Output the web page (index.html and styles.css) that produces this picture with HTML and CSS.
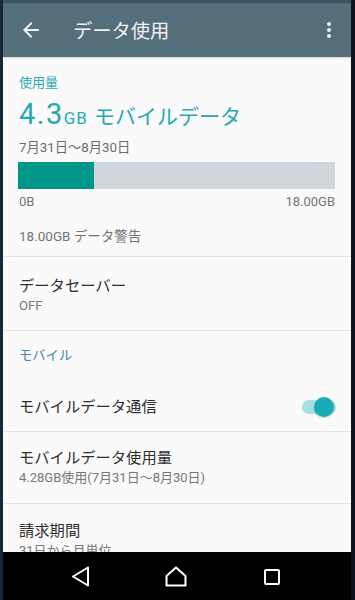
FILE: index.html
```html
<!DOCTYPE html>
<html lang="ja">
<head>
<meta charset="utf-8">
<title>データ使用</title>
<link rel="stylesheet" href="styles.css">
</head>
<body>
<div class="device">
  <div class="edge edge-l"></div>
  <div class="screen">
    <div class="status"></div>
    <header class="toolbar">
      <svg class="tb-icon" width="24" height="24" viewBox="0 0 24 24"><path d="M20 11H7.83l5.59-5.59L12 4l-8 8 8 8 1.41-1.41L7.83 13H20v-2z" fill="#eef1f3"/></svg>
      <h1 class="title">データ使用</h1>
      <svg class="tb-icon more" width="24" height="24" viewBox="0 0 24 24"><path d="M12 8c1.1 0 2-.9 2-2s-.9-2-2-2-2 .9-2 2 .9 2 2 2zm0 2c-1.1 0-2 .9-2 2s.9 2 2 2 2-.9 2-2-.9-2-2-2zm0 6c-1.1 0-2 .9-2 2s.9 2 2 2 2-.9 2-2-.9-2-2-2z" fill="#eef1f3"/></svg>
    </header>
    <main class="content">
      <section class="summary">
        <div class="label">使用量</div>
        <div class="big"><span class="num">4.3</span><span class="unit">GB</span><span class="kind">モバイルデータ</span></div>
        <div class="date">7月31日〜8月30日</div>
        <div class="bar"><div class="fill" style="width:24%"></div></div>
        <div class="scale"><span>0B</span><span>18.00GB</span></div>
        <div class="warn">18.00GB データ警告</div>
      </section>
      <section class="item saver">
        <div class="item-title">データセーバー</div>
        <div class="item-sub">OFF</div>
      </section>
      <div class="header">モバイル</div>
      <section class="item switch-row">
        <div class="item-title">モバイルデータ通信</div>
        <div class="switch"><span class="track"></span><span class="thumb"></span></div>
      </section>
      <section class="item usage">
        <div class="item-title">モバイルデータ使用量</div>
        <div class="item-sub">4.28GB使用(7月31日〜8月30日)</div>
      </section>
      <section class="item billing">
        <div class="item-title">請求期間</div>
        <div class="item-sub">31日から月単位</div>
      </section>
    </main>
    <nav class="navbar">
      <svg width="24" height="24" viewBox="0 0 24 24"><path d="M20 3.5 L5 12.5 L20 21.5 Z" fill="none" stroke="#fff" stroke-width="2" stroke-linejoin="round"/></svg>
      <svg width="24" height="24" viewBox="0 0 24 24"><path d="M2.5 12 L12 3.5 L21.5 12 V21.5 H2.5 Z" fill="none" stroke="#fff" stroke-width="2" stroke-linejoin="round"/></svg>
      <svg width="24" height="24" viewBox="0 0 24 24"><rect x="5" y="6" width="14" height="14" rx="1" fill="none" stroke="#fff" stroke-width="2"/></svg>
    </nav>
  </div>
  <div class="edge edge-r"></div>
</div>
</body>
</html>
```
FILE: styles.css
```css
html, body {
  margin: 0;
  padding: 0;
  background: #000;
}
body {
  width: 355px;
  height: 600px;
  overflow: hidden;
  font-family: "Roboto", "Noto Sans CJK JP", sans-serif;
}
.device {
  display: flex;
  width: 355px;
  height: 600px;
}
.edge-l {
  width: 3px;
  background: #17263b;
}
.edge-r {
  width: 4px;
  background: #0c131d;
}
.screen {
  width: 348px;
  display: flex;
  flex-direction: column;
  background: #fafafa;
}
.status {
  height: 3px;
  background: #3f5462;
}
.toolbar {
  height: 54px;
  background: #546e7a;
  display: flex;
  align-items: center;
  padding: 0 10px 0 16px;
  box-shadow: 0 1px 2px rgba(0,0,0,0.15);
}
.tb-icon {
  flex: none;
  display: block;
}
.title {
  margin: 0 0 0 30px;
  flex: 1;
  font-family: "Noto Sans CJK JP", sans-serif;
  font-weight: 400;
  font-size: 19.3px;
  line-height: 24px;
  color: #eef1f3;
}
.content {
  height: 495px;
  overflow: hidden;
}
.summary {
  padding: 15px 16px 10px 16px;
  border-bottom: 1px solid #e3e3e3;
}
.label {
  height: 20px;
  line-height: 20px;
  font-size: 13px;
  color: #2ba9b0;
  font-family: "Noto Sans CJK JP", sans-serif;
}
.big {
  margin-top: 4px;
  height: 36px;
  line-height: 36px;
  color: #27a8b0;
  white-space: nowrap;
}
.num {
  font-family: "Roboto", sans-serif;
  font-weight: 400;
  font-size: 29px;
  letter-spacing: 1.5px;
}
.unit {
  font-family: "Roboto", sans-serif;
  font-size: 17px;
  letter-spacing: 1px;
  margin-right: 6px;
}
.kind {
  font-family: "Noto Sans CJK JP", sans-serif;
  font-size: 21px;
}
.date {
  margin-top: 7px;
  height: 18px;
  line-height: 18px;
  font-size: 13.3px;
  color: #6b6b6b;
}
.bar {
  margin: 5px 0 0 -1px;
  height: 27px;
  background: #cfd7dc;
}
.fill {
  height: 100%;
  background: #00968a;
}
.scale {
  margin-top: 4px;
  height: 18px;
  line-height: 18px;
  font-size: 13px;
  color: #747474;
  display: flex;
  justify-content: space-between;
}
.warn {
  margin-top: 15px;
  height: 20px;
  line-height: 20px;
  font-size: 13.5px;
  color: #747474;
}
.item {
  padding: 0 16px;
  border-bottom: 1px solid #e3e3e3;
}
.item-title {
  font-size: 15.3px;
  line-height: 21px;
  color: #2e2e2e;
}
.item-sub {
  font-size: 13px;
  line-height: 18px;
  color: #767676;
}
.saver {
  padding-top: 18px;
  padding-bottom: 15px;
}
.saver .item-title {
  line-height: 22px;
}
.header {
  padding: 15px 16px 0 16px;
  height: 20px;
  line-height: 20px;
  font-size: 13.3px;
  color: #4a84a8;
}
.switch-row {
  display: flex;
  align-items: center;
  justify-content: space-between;
  padding-top: 30px;
  padding-bottom: 13px;
  padding-right: 15px;
}
.switch-row .item-title {
  line-height: 22px;
}
.switch {
  position: relative;
  width: 34px;
  height: 20px;
}
.track {
  position: absolute;
  left: 0;
  top: 3px;
  width: 34px;
  height: 14px;
  border-radius: 7px;
  background: #a6dfe2;
}
.thumb {
  position: absolute;
  right: 2px;
  top: 0;
  width: 20px;
  height: 20px;
  border-radius: 50%;
  background: #1aacb6;
  box-shadow: 0 1px 2px rgba(0,0,0,0.2);
}
.usage {
  padding-top: 16px;
  padding-bottom: 16px;
}
.billing {
  padding-top: 16px;
  border-bottom: none;
}
.billing .item-title {
  line-height: 22px;
}
.navbar {
  height: 48px;
  background: #000;
  display: flex;
  align-items: center;
  padding-left: 65px;
  gap: 72px;
}
.navbar svg {
  display: block;
  flex: none;
}
```
